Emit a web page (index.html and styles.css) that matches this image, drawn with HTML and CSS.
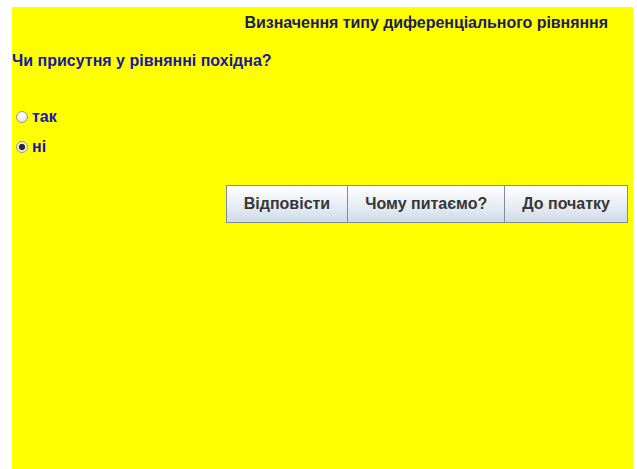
FILE: index.html
```html
<!DOCTYPE html>
<html lang="uk">
<head>
<meta charset="utf-8">
<title>Визначення типу диференціального рівняння</title>
<link rel="stylesheet" href="styles.css">
</head>
<body>
<main class="page">
  <h1 class="title">Визначення типу диференціального рівняння</h1>
  <form class="quiz">
    <p class="question">Чи присутня у рівнянні похідна?</p>
    <div class="options">
      <label class="option"><input type="radio" name="answer" value="yes"><span>так</span></label>
      <label class="option"><input type="radio" name="answer" value="no" checked><span>ні</span></label>
    </div>
    <div class="actions">
      <button type="button" class="btn">Відповісти</button>
      <button type="button" class="btn">Чому питаємо?</button>
      <button type="button" class="btn">До початку</button>
    </div>
  </form>
</main>
</body>
</html>
```
FILE: styles.css
```css
html, body {
  margin: 0;
  padding: 0;
  background: #ffffff;
}

body {
  font-family: "Liberation Sans", Arial, sans-serif;
}

.page {
  margin: 7px 4px 0 12px;
  min-height: 462px;
  background: #ffff00;
  display: flex;
  flex-direction: column;
}

.title {
  margin: 0;
  padding: 7px 25px 0 0;
  text-align: right;
  font-size: 16px;
  font-weight: bold;
  color: #1c1c5e;
  line-height: 18px;
  letter-spacing: -0.05px;
}

.quiz {
  display: flex;
  flex-direction: column;
}

.question {
  margin: 0;
  padding-top: 20px;
  font-size: 16px;
  font-weight: bold;
  color: #1818a8;
  line-height: 18px;
}

.options {
  display: flex;
  flex-direction: column;
  gap: 12px;
  padding-top: 38px;
}

.option {
  display: flex;
  align-items: center;
  gap: 4px;
  font-size: 16px;
  font-weight: bold;
  color: #1818a8;
  line-height: 18px;
}

/* classic glossy radio: grey ring, pale fill, dark dot when selected */
.option input {
  appearance: none;
  -webkit-appearance: none;
  margin: 0 0 0 4px;
  width: 12px;
  height: 12px;
  border-radius: 50%;
  border: 1px solid #9a9a9a;
  background: radial-gradient(circle at 40% 35%, #ffffff 0%, #f2f2f2 50%, #cfcfcf 100%);
  box-sizing: border-box;
}

.option input:checked {
  background: radial-gradient(circle, #2a2a2a 0, #2a2a2a 2.5px, #5a5a5a 3px, #f4f4f4 3.6px, #dcdcdc 100%);
}

.actions {
  display: flex;
  justify-content: flex-end;
  margin: 29px 5px 0 0;
}

.btn {
  height: 38px;
  padding: 0 17px;
  margin: 0;
  border: 1px solid #7f8c99;
  margin-left: -1px;
  background: linear-gradient(#ffffff 0%, #eef2f7 40%, #cfdbe8 100%);
  font-family: "Liberation Sans", Arial, sans-serif;
  font-size: 16px;
  font-weight: bold;
  color: #363636;
}
```
